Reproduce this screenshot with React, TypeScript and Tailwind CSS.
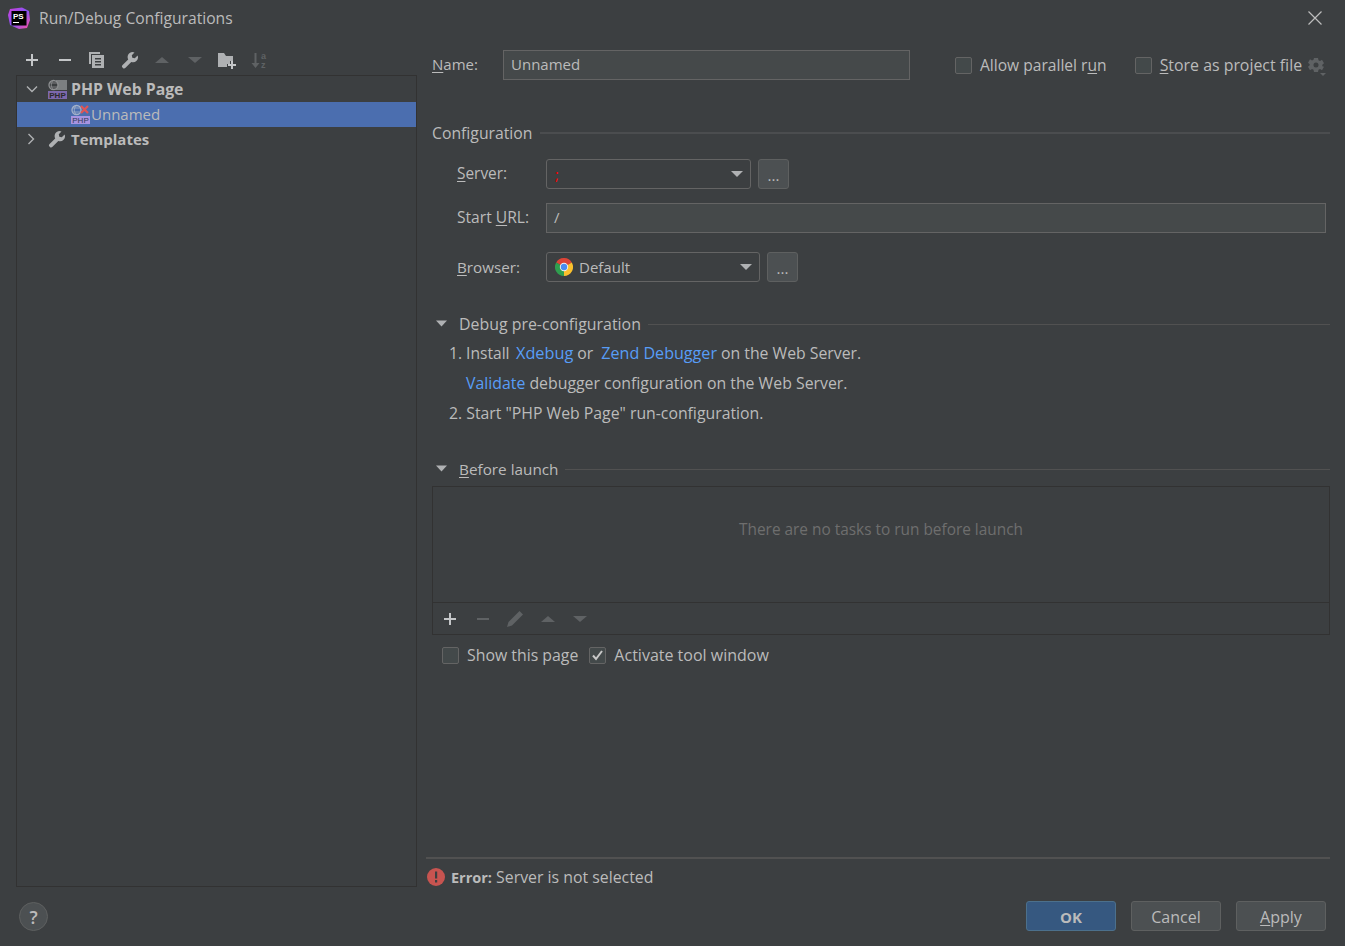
import React from "react";

const Tri = ({ down = true, color = "#afb1b3" }: { down?: boolean; color?: string }) => (
  <svg width="16" height="16" viewBox="0 0 16 16">
    <path d={down ? "M1 5h14l-7 6z" : "M1 11h14L8 5z"} fill={color} />
  </svg>
);

const Plus = ({ color = "#c4c6c8" }: { color?: string }) => (
  <svg width="16" height="16" viewBox="0 0 16 16"><path d="M7 2h2v5h5v2H9v5H7V9H2V7h5z" fill={color} /></svg>
);
const Minus = ({ color = "#c4c6c8" }: { color?: string }) => (
  <svg width="16" height="16" viewBox="0 0 16 16"><path d="M2 7h12v2H2z" fill={color} /></svg>
);
const Copy = () => (
  <svg width="16" height="18" viewBox="0 0 16 18" fill="#afb1b3">
    <path d="M0 1h11v2H2v10H0z" />
    <path fillRule="evenodd" d="M3 4h12v13H3zm3 3v1.500h6V7zm0 3v1.500h6V10zm0 3v1.500h6V13z" />
  </svg>
);
const Wrench = ({ color = "#afb1b3" }: { color?: string }) => (
  <svg width="18" height="18" viewBox="0 0 18 18">
    <path d="M11.500 1a5 5 0 0 1 2 .4L10.800 4.200l.5 2.500 2.500.5 2.800-2.800A5 5 0 0 1 10.300 11L4.500 16.800a1.800 1.800 0 0 1-2.800-.1 1.800 1.800 0 0 1-.1-2.700L7.200 8.400A5 5 0 0 1 11.500 1z" fill={color} />
  </svg>
);
const FolderPlus = () => (
  <svg width="18" height="18" viewBox="0 0 18 18">
    <path d="M0 2h6l2 3h7v5h-3v3H9v3H0z" fill="#afb1b3" />
    <path d="M13 10h2v3h3v2h-3v3h-2v-3h-3v-2h3z" fill="#c4c6c8" />
  </svg>
);
const SortAz = () => (
  <svg width="18" height="20" viewBox="0 0 18 20">
    <path d="M3.500 3h2v10h3l-4 5-4-5h3z" fill="#5f6264" />
    <text x="10" y="8.500" fontSize="9" fontWeight="700" fill="#5f6264" fontFamily="'Liberation Sans',sans-serif">a</text>
    <text x="10" y="17.500" fontSize="9" fontWeight="700" fill="#5f6264" fontFamily="'Liberation Sans',sans-serif">z</text>
  </svg>
);
const Pencil = () => (
  <svg width="18" height="18" viewBox="0 0 18 18">
    <path d="M13.500 1l3.500 3.500L6 15.500l-5 1.500 1.500-5z" fill="#5f6264" />
  </svg>
);

const PhpIcon = ({ x = false }: { x?: boolean }) => (
  <svg width="20" height="20" viewBox="0 0 20 20" className="shrink-0">
    {!x && <rect x="8" y="1" width="11" height="10" fill="#7c7f81" />}
    <circle cx="5.500" cy="6" r="4.500" fill={x ? "none" : "#3c3f41"} stroke={x ? "#a5b2c9" : "#8f9193"} strokeWidth="1.300" />
    <path d="M5.500 1.500c-3 3-3 6 0 9M2 4h7M2 8h7" fill="none" stroke={x ? "#a5b2c9" : "#8f9193"} strokeWidth="0.800" />
    {x && <path d="M10 2l7 7M17 2l-7 7" stroke="#e05555" strokeWidth="2.200" />}
    <rect x="0" y="12" width="19" height="8" fill={x ? "#a894e0" : "#7c68ad"} />
    <text x="9.500" y="19" textAnchor="middle" fontSize="8" fontFamily="'Liberation Sans',sans-serif" fill={x ? "#2f3a55" : "#2b2b2b"}>PHP</text>
  </svg>
);

const Chrome = () => (
  <svg width="18" height="18" viewBox="0 0 18 18">
    <path d="M9 9L1.200 4.500A9 9 0 0 1 16.800 4.500z" fill="#dc4437" />
    <path d="M9 9L16.800 4.500A9 9 0 0 1 9 18z" fill="#fbc02d" />
    <path d="M9 9L9 18A9 9 0 0 1 1.200 4.500z" fill="#2f9e4f" />
    <circle cx="9" cy="9" r="4.200" fill="#f0f0f0" />
    <circle cx="9" cy="9" r="3.200" fill="#4a8cf0" />
  </svg>
);

const PsLogo = () => (
  <svg width="22" height="22" viewBox="0 0 22 22">
    <defs>
      <linearGradient id="psg" x1="0" y1="0" x2="1" y2="1">
        <stop offset="0" stopColor="#d23fd8" />
        <stop offset="0.5" stopColor="#8454f4" />
        <stop offset="1" stopColor="#ff4fa0" />
      </linearGradient>
    </defs>
    <path d="M2 2l12-1.500 7 3.500 1 9-3 8-8 1-9-4-2-10z" fill="url(#psg)" />
    <rect x="3.500" y="4" width="15" height="14.500" fill="#000" />
    <text x="5" y="12" fontSize="8" fontWeight="700" fill="#fff" fontFamily="'Liberation Sans',sans-serif">PS</text>
    <rect x="5" y="15" width="6" height="1" fill="#fff" />
  </svg>
);

const Cog = () => (
  <svg width="20" height="20" viewBox="0 0 20 20">
    <path fillRule="evenodd" d="M7 1h4l.5 2.200 1.500.7 2-1.100 2 3.400-1.700 1.500v1.600L17 9.800l-2 3.400-2-1.100-1.500.7L11 15H7l-.5-2.200-1.500-.7-2 1.100-2-3.400 1.700-1.500V7.200L1 5.700 3 2.300l2 1.100 1.500-.7zM9 5.500A2.500 2.500 0 1 0 9 10.500 2.500 2.500 0 0 0 9 5.500z" fill="#5f6264" />
    <path d="M13 16h6l-3 3z" fill="#5f6264" />
  </svg>
);

const Check = ({ checked = false }: { checked?: boolean }) => (
  <span className="w-[17px] h-[17px] shrink-0 rounded-[2px] border border-[#646464] bg-[#43494a] flex items-center justify-center">
    {checked && (
      <svg width="13" height="13" viewBox="0 0 13 13">
        <path d="M2 6.500l3 3.500 6-8" fill="none" stroke="#c8c8c8" strokeWidth="2" />
      </svg>
    )}
  </span>
);

const Section = ({ children, tri, thick }: { children: React.ReactNode; tri?: boolean; thick?: boolean }) => (
  <div className="flex items-center h-[20px]">
    {tri && (
      <span className="w-[27px] pl-[3px] flex shrink-0">
        <svg width="14" height="14" viewBox="0 0 14 14"><path d="M1 3.500h11l-5.500 6z" fill="#afb1b3" /></svg>
      </span>
    )}
    <span className="shrink-0">{children}</span>
    <span className={thick ? "flex-1 h-[2px] bg-[#4b4d4f] ml-[8px]" : "flex-1 h-px bg-[#515151] ml-[7px]"} />
  </div>
);

const DotsBtn = () => (
  <button className="w-[31px] h-[30px] rounded-[3px] border border-[#5e6060] bg-[#4c5052] text-[#bbbbbb] flex items-end justify-center pb-[5px] text-[15px] leading-none">
    ...
  </button>
);

const Combo = ({ w, children }: { w: string; children: React.ReactNode }) => (
  <div className={`${w} h-[30px] rounded-[3px] border border-[#646464] bg-[#3c3f41] flex items-center pl-[8px] pr-[7px]`}>
    <span className="flex-1 flex items-center gap-[6px] min-w-0">{children}</span>
    <svg width="12" height="8" viewBox="0 0 12 8"><path d="M0 1h12L6 7z" fill="#afb1b3" /></svg>
  </div>
);

const FootBtn = ({ children, primary }: { children: React.ReactNode; primary?: boolean }) => (
  <button
    className={
      primary
        ? "w-[90px] h-[30px] pt-px rounded-[3px] border border-[#4c708c] bg-[#365880] text-[#bbbbbb] font-bold text-[15px]"
        : "w-[90px] h-[30px] pt-px rounded-[3px] border border-[#5e6060] bg-[#4c5052] text-[#bbbbbb] text-[16px]"
    }
  >
    {children}
  </button>
);

export default function App() {
  return (
    <div
      className="w-[1345px] h-[946px] bg-[#3c3f41] text-[#bbbbbb] text-[15px] leading-[20px] flex flex-col overflow-hidden"
      style={{ fontFamily: "'Open Sans','Noto Sans',sans-serif" }}
    >
      {/* title bar */}
      <div className="h-[36px] shrink-0 flex items-center pl-[8px] pr-[22px]">
        <PsLogo />
        <span className="ml-[9px] flex-1 text-[15.650px]">Run/Debug Configurations</span>
        <svg width="16" height="16" viewBox="0 0 16 16"><path d="M1.500 1.500l13 13M14.500 1.500l-13 13" stroke="#bdbdbd" strokeWidth="1.200" /></svg>
      </div>

      <div className="flex flex-1 min-h-0">
        {/* left column */}
        <div className="w-[417px] shrink-0 pl-[16px] flex flex-col">
          <div className="h-[39px] shrink-0 flex items-center pb-[3px] pt-[12px]">
            {[
              <Plus key="a" />,
              <Minus key="b" />,
              <Copy key="c" />,
              <Wrench key="d" />,
              <Tri key="e" down={false} color="#5f6264" />,
              <Tri key="f" color="#5f6264" />,
              <FolderPlus key="g" />,
              <SortAz key="h" />,
            ].map((ic, i) => (
              <span key={i} className="w-[32.500px] flex justify-center shrink-0">{ic}</span>
            ))}
          </div>
          <div className="flex-1 border border-[#323232] pt-[1px] min-h-0">
            <div className="h-[25px] flex items-center font-bold pl-[8px] pb-px">
              <svg width="14" height="14" viewBox="0 0 14 14" className="mr-[9px]"><path d="M2 4.500l5 5 5-5" fill="none" stroke="#afb1b3" strokeWidth="1.400" /></svg>
              <PhpIcon />
              <span className="ml-[3px] text-[15.800px]">PHP Web Page</span>
            </div>
            <div className="h-[25px] flex items-center bg-[#4b6eaf] pl-[54px] pb-px">
              <PhpIcon x />
              <span>Unnamed</span>
            </div>
            <div className="h-[25px] flex items-center font-bold pl-[7px] pb-px">
              <svg width="14" height="14" viewBox="0 0 14 14" className="mr-[10px]"><path d="M4.500 2l5 5-5 5" fill="none" stroke="#afb1b3" strokeWidth="1.400" /></svg>
              <Wrench />
              <span className="ml-[5px]">Templates</span>
            </div>
          </div>
        </div>

        {/* right column */}
        <div className="w-[904px] ml-[9px] flex flex-col pt-[14px]">
          <div className="pl-[6px] flex-1 min-h-0">
            {/* name row */}
            <div className="h-[30px] flex items-center">
              <span className="w-[71px] shrink-0 pb-[2px]"><u className="underline-offset-2">N</u>ame:</span>
              <div className="w-[407px] h-[30px] border border-[#646464] bg-[#45494a] pl-[7px] pb-[2px] flex items-center">Unnamed</div>
              <span className="ml-[45px]"><Check /></span>
              <span className="ml-[8px] text-[15.600px]">Allow parallel r<u className="underline-offset-2">u</u>n</span>
              <span className="ml-[28px]"><Check /></span>
              <span className="ml-[8px] text-[15.900px]"><u className="underline-offset-2">S</u>tore as project file</span>
              <span className="ml-[5px] mt-[3px] flex"><Cog /></span>
            </div>

            {/* configuration */}
            <div className="mt-[43px]"><Section thick><span className="text-[15.750px]">Configuration</span></Section></div>

            <div className="pl-[25px] mt-[16px]">
              <div className="flex items-center h-[30px]">
                <span className="w-[89px] shrink-0 pb-px text-[15.400px]"><u className="underline-offset-2">S</u>erver:</span>
                <Combo w="w-[205px]"><span className="text-[#ff0000] leading-none">;</span></Combo>
                <span className="ml-[7px]"><DotsBtn /></span>
              </div>
              <div className="flex items-center h-[30px] mt-[14px]">
                <span className="w-[89px] shrink-0 pb-[2px] text-[15.600px]">Start <u className="underline-offset-2">U</u>RL:</span>
                <div className="w-[780px] h-[30px] border border-[#646464] bg-[#45494a] pl-[7px] pb-[2px] flex items-center">/</div>
              </div>
              <div className="flex items-center h-[30px] mt-[19px]">
                <span className="w-[89px] shrink-0 text-[15.200px]"><u className="underline-offset-2">B</u>rowser:</span>
                <Combo w="w-[214px]"><Chrome /><span>Default</span></Combo>
                <span className="ml-[7px]"><DotsBtn /></span>
              </div>
            </div>

            {/* debug */}
            <div className="mt-[32px]"><Section tri><span className="text-[15.900px]">Debug pre-configuration</span></Section></div>
            <div className="pl-[17px] mt-[4px] leading-[30px]">
              <div className="h-[30px] flex text-[15.600px]">
                <span className="w-[67px] shrink-0">1. Install</span>
                <a className="text-[#589df6] text-[16.300px]">Xdebug</a>
                <span className="w-[24px] shrink-0 ml-[4px] text-[15.800px]">or</span>
                <a className="text-[#589df6] text-[16.100px]">Zend Debugger</a>
                <span className="ml-[4px] text-[15.800px]">on the Web Server.</span>
              </div>
              <div className="h-[30px] pl-[17px] text-[15.850px]"><a className="text-[#589df6]">Validate</a> debugger configuration on the Web Server.</div>
              <div className="h-[30px] text-[15.800px]">2. Start "PHP Web Page" run-configuration.</div>
            </div>

            {/* before launch */}
            <div className="mt-[31px]"><Section tri><span className="text-[15.300px]"><u className="underline-offset-2">B</u>efore launch</span></Section></div>
            <div className="mt-[7px] h-[149px] border border-[#323232] flex flex-col">
              <div className="flex-1 flex justify-center pt-[33px] text-[#6e6e6e] border-b border-[#323232] text-[15.400px]">
                There are no tasks to run before launch
              </div>
              <div className="h-[31px] shrink-0 flex items-center pl-px">
                <span className="w-[32.500px] flex justify-center"><Plus /></span>
                <span className="w-[32.500px] flex justify-center"><Minus color="#5f6264" /></span>
                <span className="w-[32.500px] flex justify-center"><Pencil /></span>
                <span className="w-[32.500px] flex justify-center"><Tri down={false} color="#5f6264" /></span>
                <span className="w-[32.500px] flex justify-center"><Tri color="#5f6264" /></span>
              </div>
            </div>
            <div className="mt-[10px] h-[20px] flex items-center pl-[10px]">
              <Check />
              <span className="ml-[8px] text-[15.850px]">Show this page</span>
              <span className="ml-[11px]"><Check checked /></span>
              <span className="ml-[8px] text-[16px]">Activate tool window</span>
            </div>
          </div>

          {/* error */}
          <div className="h-[30px] shrink-0 border-t-2 border-[#515151] flex items-center pt-[8px] pl-[1px]">
            <svg width="18" height="18" viewBox="0 0 18 18"><circle cx="9" cy="9" r="9" fill="#c75450" /><path d="M8 3.500h2.200v7H8zM8 12h2.200v2.500H8z" fill="#3c3f41" /></svg>
            <span className="ml-[6px] text-[15.850px]"><b className="font-bold text-[14.500px]">Error:</b> Server is not selected</span>
          </div>
        </div>
      </div>

      {/* footer */}
      <div className="h-[59px] shrink-0 flex items-start pt-[14px] pl-[19px] pr-[19px]">
        <button className="w-[29px] h-[29px] mt-px rounded-full border border-[#5e6060] bg-[#4c5052] text-[#bbbbbb] text-[18px] font-semibold flex items-center justify-center">?</button>
        <div className="flex-1" />
        <div className="flex gap-[15px]">
          <FootBtn primary>OK</FootBtn>
          <FootBtn>Cancel</FootBtn>
          <FootBtn><u className="underline-offset-2">A</u>pply</FootBtn>
        </div>
      </div>
    </div>
  );
}
